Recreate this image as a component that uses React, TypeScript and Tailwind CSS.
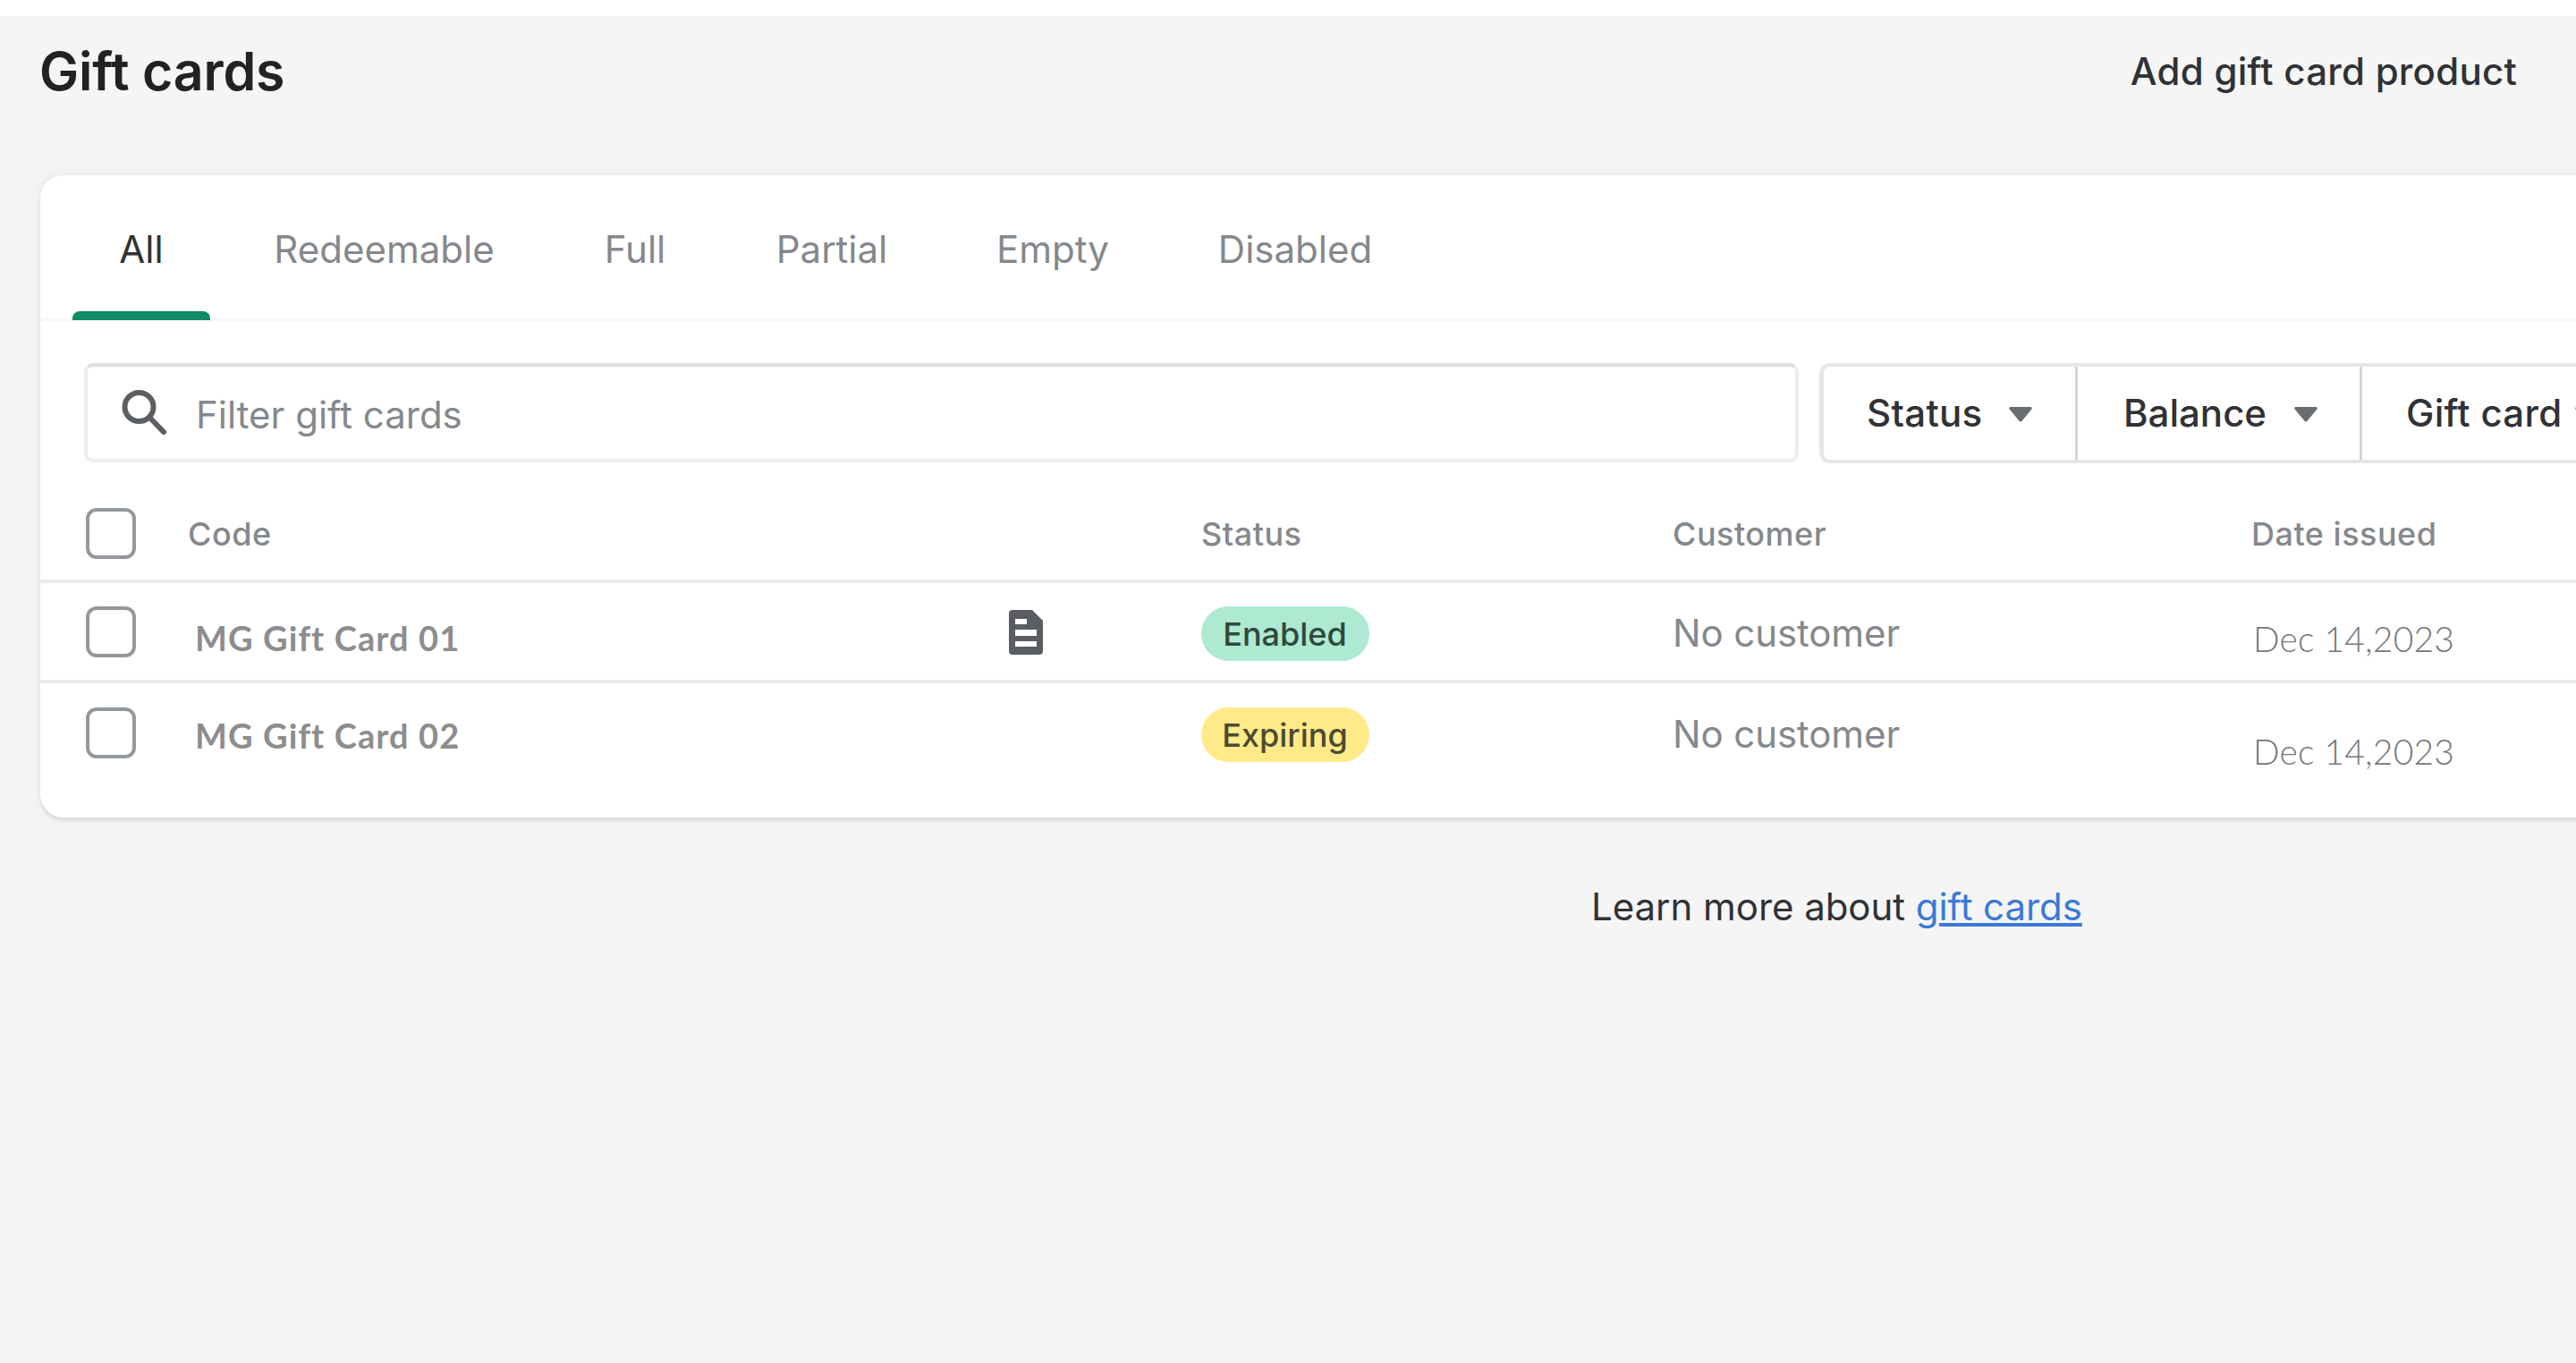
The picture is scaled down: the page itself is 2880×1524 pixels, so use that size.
import { ReactNode } from 'react'

interface GiftCard {
  code: string
  status: 'Enabled' | 'Expiring'
  hasNote: boolean
  customer: string
  issued: string
}

const tabs = [
  { label: 'All', className: 'w-[154px] text-[#303235]' },
  { label: 'Redeemable', className: 'ml-[35px] w-[319px] text-[#85888c]' },
  { label: 'Full', className: 'ml-[43px] w-[156px] text-[#85888c]' },
  { label: 'Partial', className: 'ml-[42px] w-[200px] text-[#85888c]' },
  { label: 'Empty', className: 'ml-[47px] w-[200px] text-[#85888c]' },
  { label: 'Disabled', className: 'ml-[61px] w-[220px] text-[#85888c]' },
]

const giftCards: GiftCard[] = [
  {
    code: 'MG Gift Card 01',
    status: 'Enabled',
    hasNote: true,
    customer: 'No customer',
    issued: 'Dec 14,2023',
  },
  {
    code: 'MG Gift Card 02',
    status: 'Expiring',
    hasNote: false,
    customer: 'No customer',
    issued: 'Dec 14,2023',
  },
]

const columns =
  'grid grid-cols-[114px_917px_216px_527px_647px_1fr] items-center pl-[51px]'

function Checkbox() {
  return (
    <span className="block h-[57px] w-[56px] rounded-[12px] border-[4px] border-[#93989c] bg-white" />
  )
}

function Caret() {
  return (
    <svg width="26" height="17" viewBox="0 0 26 17" className="mt-[3px] shrink-0">
      <path d="M2 0h22c1.800 0 2.300 1.600 1.200 2.800L14.500 15.800c-.8 1-2.200 1-3 0L.8 2.800C-.3 1.600.2 0 2 0z" fill="#6a6d71" />
    </svg>
  )
}

function SearchIcon() {
  return (
    <svg width="52" height="53" viewBox="0 0 52 53" className="shrink-0">
      <circle cx="19.500" cy="20" r="16" fill="none" stroke="#5c5f62" strokeWidth="6" />
      <path d="M31 31.500L47 48" stroke="#5c5f62" strokeWidth="6" strokeLinecap="round" />
    </svg>
  )
}

function NoteIcon() {
  return (
    <svg width="38" height="50" viewBox="0 0 38 50">
      <path
        fillRule="evenodd"
        d="M4 0h22l12 12v34a4 4 0 0 1-4 4H4a4 4 0 0 1-4-4V4a4 4 0 0 1 4-4zM7 10v6h13v-6zM7 22v7h24v-7zM7 35v6h24v-6z"
        fill="#5a5d61"
      />
    </svg>
  )
}

function FilterButton({ className, children }: { className: string; children: ReactNode }) {
  return (
    <button className={`flex h-full items-center border-[#d3d5d7] pb-[1px] ${className}`}>
      {children}
      <Caret />
    </button>
  )
}

function GiftCardRow({ card, last }: { card: GiftCard; last: boolean }) {
  return (
    <div className={`${columns} ${last ? 'h-[110px]' : 'h-[112px] border-b-[4px] border-[#e9ebeb]'}`}>
      <Checkbox />
      <span
        className={`pl-[8px] font-[Lato] text-[38px] leading-[46px] font-bold tracking-[1.1px] text-[#8d8d8f] ${last ? 'mt-[6px]' : 'mt-[14px]'}`}
      >
        {card.code}
      </span>
      <span className="mt-[2px] pl-[1px]">{card.hasNote && <NoteIcon />}</span>
      <span
        className={`mt-[5px] flex h-[61px] w-[188px] items-center justify-center rounded-full pr-[1px] text-[36px] font-medium ${
          card.status === 'Enabled' ? 'bg-[#aee9d1] text-[#2f4840]' : 'bg-[#ffea8a] text-[#4e4a30]'
        }`}
      >
        {card.status}
      </span>
      <span className="mt-[4px] text-[42px] leading-[50px] tracking-[-0.1px] text-[#85888c]">
        {card.customer}
      </span>
      <span
        className={`pl-[2px] font-[Lato] text-[39px] leading-[46px] font-light tracking-[0.2px] text-[#77777a] ${last ? 'mt-[42px]' : 'mt-[15px]'}`}
      >
        {card.issued}
      </span>
    </div>
  )
}

export default function App() {
  return (
    <div className="h-[1524px] w-[2880px] overflow-hidden border-t-[18px] border-white bg-[#f5f5f5] font-[Inter,sans-serif] whitespace-nowrap">
      <header className="flex h-[123px] items-center justify-between pr-[66px] pl-[44px]">
        <h1 className="pt-[1px] text-[59px] font-semibold tracking-[-0.2px] text-[#202223]">Gift cards</h1>
        <button className="text-[42px] font-medium tracking-[0.26px] text-[#303235]">Add gift card product</button>
      </header>

      <main className="mt-[55px] ml-[45px] h-[718px] w-[2900px] rounded-[26px] bg-white shadow-[0_4px_3px_#dcdddd,0_0_14px_#e6e6e6]">
        <nav className="flex h-[164px] border-b-[5px] border-[#f8f8f8] pl-[36px]">
          {tabs.map((tab, i) => (
            <div key={tab.label} className={`flex flex-col items-center text-[42px] ${tab.className}`}>
              <span className="flex h-[164px] shrink-0 items-center">{tab.label}</span>
              {i === 0 && (
                <span className="-mt-[12px] h-[10px] w-full shrink-0 rounded-t-[8px] bg-[#118a66]" />
              )}
            </div>
          ))}
        </nav>

        <div className="flex pt-[46px] pl-[49px]">
          <div className="flex h-[111px] w-[1917px] items-center rounded-[10px] border-[4px] border-[#eeeeef] border-t-[#dddedf] pl-[38px]">
            <SearchIcon />
            <span className="ml-[31px] pt-[3px] text-[42px] text-[#85888c]">Filter gift cards</span>
          </div>
          <div className="ml-[23px] flex h-[112px] flex-1 rounded-l-[12px] border-y-[4px] border-l-[5px] border-[#e4e6e7] text-[42px] font-medium text-[#303235]">
            <FilterButton className="w-[284px] gap-[30px] border-r-[3px] pl-[48px] tracking-[0.3px]">Status</FilterButton>
            <FilterButton className="w-[318px] gap-[31px] border-r-[3px] pl-[51px]">Balance</FilterButton>
            <FilterButton className="gap-[14px] pl-[49px] tracking-[0.3px]">Gift card</FilterButton>
          </div>
        </div>

        <div className={`${columns} mt-[27px] h-[107px] border-b-[4px] border-[#e9ebeb] text-[36px] font-medium tracking-[0.5px] text-[#85888c]`}>
          <Checkbox />
          <span>Code</span>
          <span />
          <span>Status</span>
          <span>Customer</span>
          <span>Date issued</span>
        </div>
        {giftCards.map((card, i) => (
          <GiftCardRow key={card.code} card={card} last={i === giftCards.length - 1} />
        ))}
      </main>

      <p className="mt-[70px] pl-[1779px] text-[42px] leading-[60px] tracking-[-0.05px] text-[#303235]">
        Learn more about{' '}
        <a className="text-[#3b79d6] underline decoration-[4px] underline-offset-[3px]">gift cards</a>
      </p>
    </div>
  )
}
